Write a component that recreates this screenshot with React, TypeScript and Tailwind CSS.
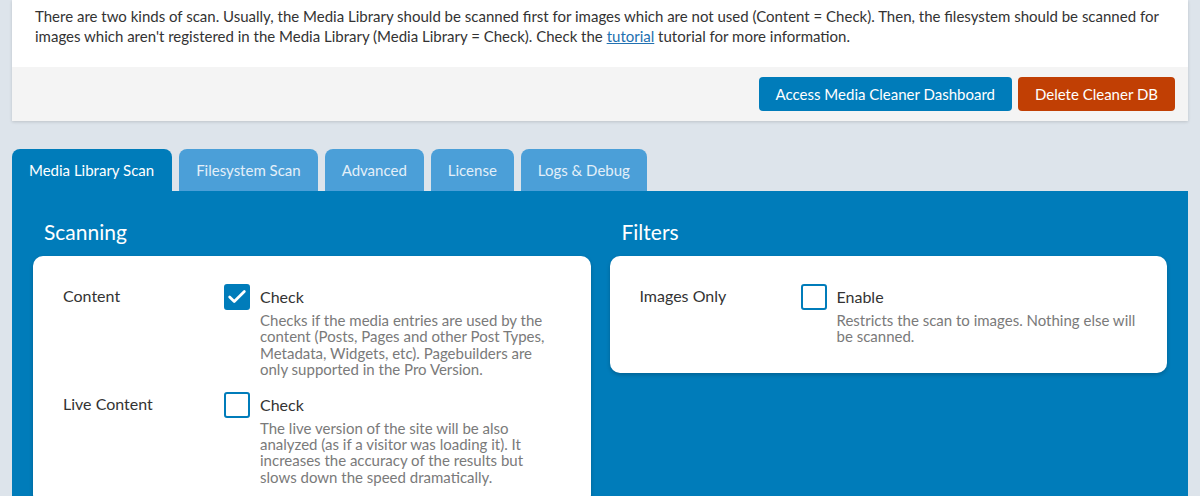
import { Check } from 'lucide-react';

function Checkbox({ checked }: { checked?: boolean }) {
    return (
        <div
            className={`w-[26px] h-[26px] shrink-0 rounded-[3px] border-2 border-[#007cba] flex items-center justify-center ${checked ? 'bg-[#007cba]' : 'bg-white'}`}
        >
            {checked && <Check className="w-[22px] h-[22px] text-white" strokeWidth={3} />}
        </div>
    );
}

function OptionRow({ label, checked, title, desc, descWidth }: { label: string; checked?: boolean; title: string; desc: string; descWidth: string }) {
    return (
        <div className="flex">
            <div className="w-[161px] shrink-0 text-[16px] text-[#333]">{label}</div>
            <Checkbox checked={checked} />
            <div className={`ml-[10px] ${descWidth}`}>
                <div className="text-[16px] leading-[20px] pt-[3px] text-[#333]">{title}</div>
                <div className="mt-[5px] text-[15px] leading-[16.4px] text-[#7a7a7a]">{desc}</div>
            </div>
        </div>
    );
}

const tabs = ['Media Library Scan', 'Filesystem Scan', 'Advanced', 'License', 'Logs & Debug'];

export default function App() {
    return (
        <div className="min-h-screen bg-[#dde4eb] px-[12px] overflow-hidden" style={{ fontFamily: 'Lato, "Open Sans", sans-serif' }}>
            <div className="bg-white shadow-[0_1px_3px_rgba(0,0,0,0.15)]">
                <p className="px-[23px] pt-[6px] h-[67px] text-[15px] leading-[20px] text-[#333]">
                    There are two kinds of scan. Usually, the Media Library should be scanned first for images which are not used (Content = Check). Then, the filesystem should be scanned for images which aren't registered in the Media Library (Media Library = Check). Check the{' '}
                    <a className="text-[#2271b1] underline" href="#">tutorial</a> tutorial for more information.
                </p>
                <div className="bg-[#f4f4f4] h-[54px] flex justify-end items-center gap-[6px] pr-[13px]">
                    <button className="h-[34px] px-[17px] rounded-[4px] bg-[#007cba] text-white text-[15px]">
                        Access Media Cleaner Dashboard
                    </button>
                    <button className="h-[34px] px-[17px] rounded-[4px] bg-[#c13f04] text-white text-[15px]">
                        Delete Cleaner DB
                    </button>
                </div>
            </div>

            <div className="mt-[28px] flex gap-[7px]">
                {tabs.map((t, i) => (
                    <div
                        key={t}
                        className={`h-[42px] rounded-t-[8px] flex items-center text-[15px] px-[17px] ${i === 0 ? 'bg-[#007cba] text-white pr-[18px]' : 'bg-[#4b9fd8] text-[#e3eff9]'}`}
                    >
                        {t}
                    </div>
                ))}
            </div>

            <div className="bg-[#007cba] px-[21px] pb-[30px] grid grid-cols-2 gap-[19px]">
                <div>
                    <h2 className="text-white text-[21px] pl-[11px] pt-[25px] h-[65px]">Scanning</h2>
                    <div className="bg-white rounded-[10px] shadow-[0_2px_4px_rgba(0,0,0,0.2)] pl-[30px] pt-[28px] pb-[20px] flex flex-col gap-[14px]">
                        <OptionRow
                            label="Content"
                            checked
                            title="Check"
                            descWidth="w-[290px]"
                            desc="Checks if the media entries are used by the content (Posts, Pages and other Post Types, Metadata, Widgets, etc). Pagebuilders are only supported in the Pro Version."
                        />
                        <OptionRow
                            label="Live Content"
                            title="Check"
                            descWidth="w-[290px]"
                            desc="The live version of the site will be also analyzed (as if a visitor was loading it). It increases the accuracy of the results but slows down the speed dramatically."
                        />
                    </div>
                </div>
                <div>
                    <h2 className="text-white text-[21px] pl-[12px] pt-[25px] h-[65px]">Filters</h2>
                    <div className="bg-white rounded-[10px] shadow-[0_2px_4px_rgba(0,0,0,0.2)] pl-[30px] pt-[28px] h-[117px]">
                        <OptionRow
                            label="Images Only"
                            title="Enable"
                            descWidth="w-[312px]"
                            desc="Restricts the scan to images. Nothing else will be scanned."
                        />
                    </div>
                </div>
            </div>
        </div>
    );
}
